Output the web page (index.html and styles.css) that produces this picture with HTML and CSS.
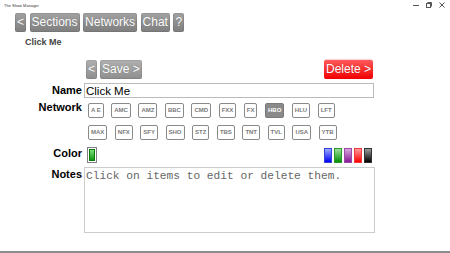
FILE: index.html
```html
<!doctype html>
<html>
<head>
<meta charset="UTF-8">
<title>The Show Manager</title>
<link rel="stylesheet" href="styles.css">
</head>

<body>
  <div class="app">
    <div class="titlebar">
      <span class="app-name">The Show Manager</span>
      <span class="win-ctrls">
        <svg width="6" height="6" viewBox="0 0 6 6"><path d="M0 3.5h6" stroke="#555" stroke-width="1"/></svg>
        <svg width="6" height="6" viewBox="0 0 6 6"><rect x="0.5" y="1.5" width="4" height="4" fill="none" stroke="#555" stroke-width="1"/><path d="M1.5 0.5h4v4" fill="none" stroke="#555" stroke-width="1"/></svg>
        <svg width="6" height="6" viewBox="0 0 6 6"><path d="M0.5 0.5l5 5M5.5 0.5l-5 5" stroke="#555" stroke-width="1"/></svg>
      </span>
    </div>

    <nav class="topnav">
      <button class="btn">&lt;</button>
      <button class="btn">Sections</button>
      <button class="btn">Networks</button>
      <button class="btn">Chat</button>
      <button class="btn">?</button>
    </nav>

    <h1 class="page-title">Click Me</h1>

    <form class="editor">
      <div class="row">
        <div class="label"></div>
        <div class="field actions">
          <button type="button" class="btn btn-light">&lt;</button>
          <button type="button" class="btn btn-light">Save &gt;</button>
          <button type="button" class="btn btn-danger">Delete &gt;</button>
        </div>
      </div>

      <div class="row row-name">
        <label class="label">Name</label>
        <div class="field"><input class="name-input" type="text" value="Click Me"></div>
      </div>

      <div class="row row-network">
        <div class="label">Network</div>
        <div class="field">
          <div class="chips">
            <span class="chip">A E</span>
            <span class="chip">AMC</span>
            <span class="chip">AMZ</span>
            <span class="chip">BBC</span>
            <span class="chip">CMD</span>
            <span class="chip">FXX</span>
            <span class="chip">FX</span>
            <span class="chip chip-on">HBO</span>
            <span class="chip">HLU</span>
            <span class="chip">LFT</span>
            <span class="chip">MAX</span>
            <span class="chip">NFX</span>
            <span class="chip">SFY</span>
            <span class="chip">SHO</span>
            <span class="chip">STZ</span>
            <span class="chip">TBS</span>
            <span class="chip">TNT</span>
            <span class="chip">TVL</span>
            <span class="chip">USA</span>
            <span class="chip">YTB</span>
          </div>
        </div>
      </div>

      <div class="row row-color">
        <div class="label">Color</div>
        <div class="field color-field">
          <span class="swatch"><span class="swatch-fill"></span></span>
          <span class="palette">
            <span class="pal pal-blue"></span>
            <span class="pal pal-green"></span>
            <span class="pal pal-purple"></span>
            <span class="pal pal-red"></span>
            <span class="pal pal-black"></span>
          </span>
        </div>
      </div>

      <div class="row row-notes">
        <label class="label">Notes</label>
        <div class="field"><textarea class="notes" placeholder="Click on items to edit or delete them."></textarea></div>
      </div>
    </form>
  </div>
</body>
</html>
```

FILE: styles.css
```css
body {
  margin: 0;
  background-color: #fff;
  font-family: "Liberation Sans", Arial, sans-serif;
}
.app {
  height: 253px;
  box-sizing: border-box;
  border-bottom: 2px solid #8c8c8c;
  overflow: hidden;
}
/* window title */
.titlebar {
  height: 10px;
  display: flex;
  align-items: center;
  padding: 0 4px;
}
.app-name {
  font-size: 4px;
  color: #333;
}
.win-ctrls {
  margin-left: auto;
  margin-right: 1px;
  display: flex;
  gap: 7px;
}
/* buttons */
.btn {
  height: 19px;
  padding: 0 2px;
  border: none;
  border-radius: 2px;
  font-family: "Liberation Sans", Arial, sans-serif;
  font-size: 12px;
  line-height: 19px;
  color: #fff;
  background: linear-gradient(#a2a2a2, #7e7e7e);
  box-shadow: inset 0 0 0 1px rgba(0, 0, 0, 0.08);
  text-shadow: 0 0 1px rgba(0, 0, 0, 0.25);
}
.btn-light {
  background: linear-gradient(#b0b0b0, #8e8e8e);
}
.btn-danger {
  margin-left: auto;
  margin-right: 3px;
  background: linear-gradient(#ff5a5a, #f00000);
  box-shadow: 0 -1px 1px rgba(255, 120, 140, 0.35);
}
.topnav {
  display: flex;
  gap: 3.5px;
  padding: 3px 0 0 15px;
}
.page-title {
  margin: 5px 0 0 25px;
  font-size: 9px;
  line-height: 11px;
  color: #444;
}
/* form rows */
.editor {
  margin-top: 12px;
}
.row {
  display: flex;
  align-items: flex-start;
}
.label {
  width: 82px;
  flex: none;
  text-align: right;
  font-size: 11px;
  line-height: 13px;
  font-weight: bold;
  color: #000;
}
.field {
  width: 292px;
  margin-left: 2px;
}
.actions {
  display: flex;
  gap: 3px;
  padding-left: 2px;
  box-sizing: border-box;
}
.row-name {
  margin-top: 4px;
}
.row-name .label {
  padding-top: 1px;
}
.name-input {
  display: block;
  width: 290px;
  height: 15px;
  box-sizing: border-box;
  margin: 0;
  padding: 0 1px;
  border: 1px solid #bbb;
  font-family: "Liberation Sans", Arial, sans-serif;
  font-size: 11.5px;
  color: #000;
}
.row-network {
  margin-top: 3px;
}
.chips {
  display: flex;
  flex-wrap: wrap;
  gap: 7px 7.5px;
  width: 265px;
  margin-left: 4px;
  padding-top: 2px;
}
.chip {
  height: 15px;
  box-sizing: border-box;
  padding: 0 2px;
  border: 1.5px solid #8a8a8a;
  border-radius: 2px;
  font-size: 6px;
  line-height: 12px;
  font-weight: bold;
  color: #7a7a7a;
}
.chip-on {
  background-color: #8a8a8a;
  border-color: #7a7a7a;
  color: #fff;
}
.row-color {
  margin-top: 7px;
}
.color-field {
  display: flex;
  align-items: flex-start;
}
.swatch {
  width: 10px;
  height: 16px;
  box-sizing: border-box;
  margin-left: 3px;
  padding: 1px;
  border: 1px solid #808080;
  background-color: #fff;
}
.swatch-fill {
  display: block;
  height: 100%;
  box-sizing: border-box;
  border: 1px solid #0a7a0a;
  background: linear-gradient(#7de07d, #119911);
}
.palette {
  display: flex;
  gap: 2px;
  margin: 1px 4px 0 auto;
}
.pal {
  width: 8px;
  height: 15px;
  box-sizing: border-box;
}
.pal-blue { background: linear-gradient(#9aa8ff, #0000f0); border: 1px solid #3344dd; }
.pal-green { background: linear-gradient(#9be09b, #069006); border: 1px solid #2a9a2a; }
.pal-purple { background: linear-gradient(#d7a3dc, #8a1a96); border: 1px solid #9a4aa5; }
.pal-red { background: linear-gradient(#ff9a9a, #ff0000); border: 1px solid #f03a3a; }
.pal-black { background: linear-gradient(#9a9a9a, #000); border: 1px solid #333; }
.row-notes {
  margin-top: 4px;
}
.row-notes .label {
  padding-top: 1px;
}
.notes {
  display: block;
  width: 291px;
  height: 66px;
  box-sizing: border-box;
  margin: 0;
  padding: 2px 1px;
  border: 1px solid #ccc;
  resize: none;
  font-family: "Liberation Mono", "Courier New", monospace;
  font-size: 11.2px;
}
.notes::placeholder {
  color: #666;
}
```
